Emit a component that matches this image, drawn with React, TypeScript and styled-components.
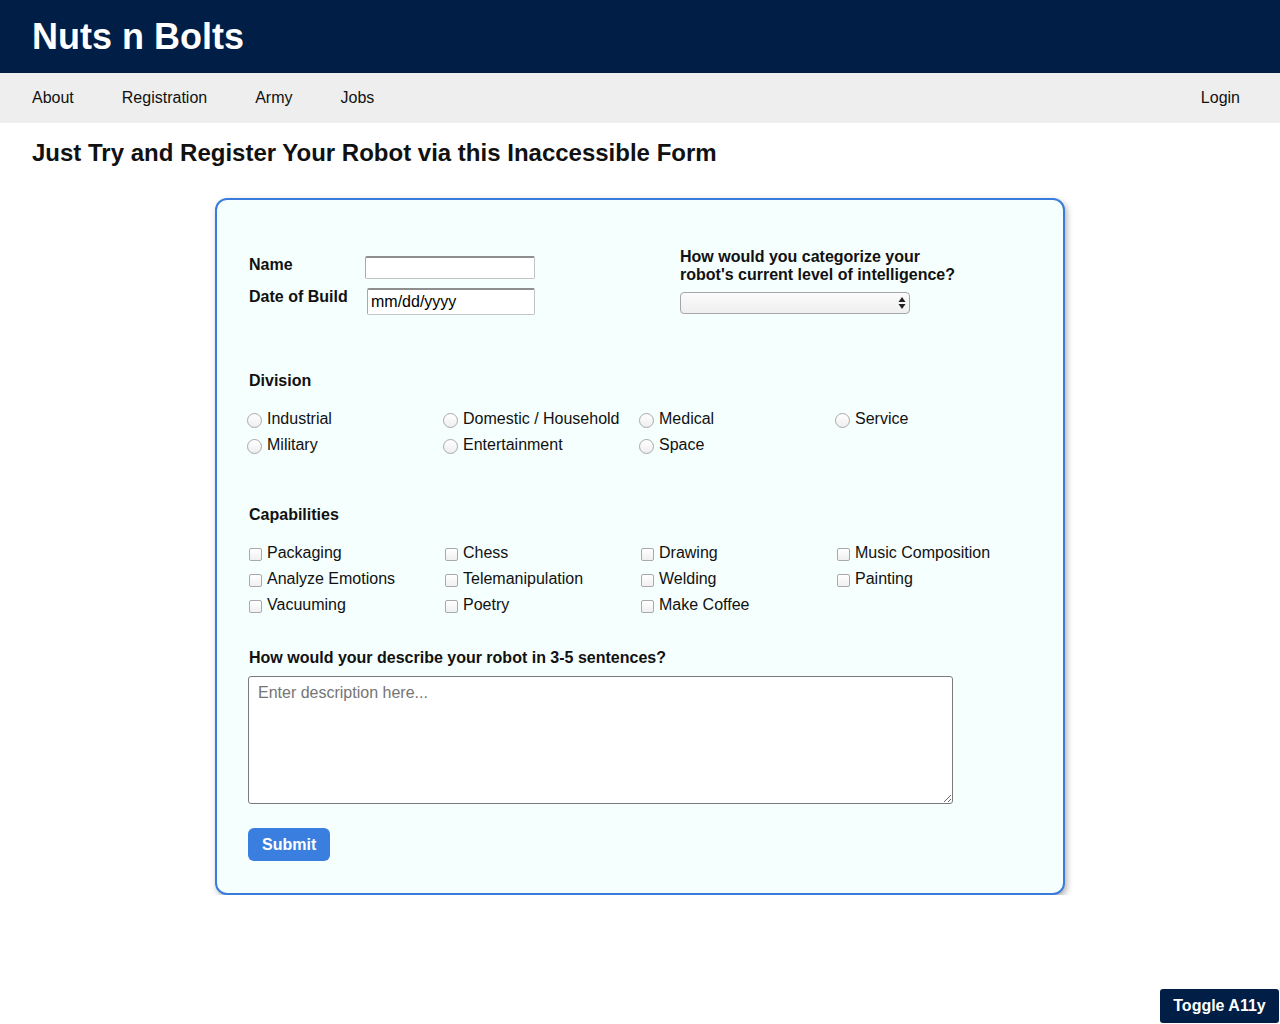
import styled, { createGlobalStyle } from "styled-components";

const GlobalStyle = createGlobalStyle`
	body {
		margin: 0;
		background: #fff;
		font-family: "Liberation Sans", Arial, Helvetica, sans-serif;
		font-size: 16px;
		color: #111;
	}
`;

const Header = styled.header`
	height: 73px;
	background-color: #001e46;
	display: flex;
	align-items: center;
	padding: 0 32px;
	box-sizing: border-box;
`;
const Logo = styled.h1`
	margin: 0;
	color: #fff;
	font-size: 36px;
	font-weight: 700;
	line-height: 1;
`;
const Nav = styled.nav`
	height: 50px;
	background-color: #eee;
	display: flex;
	align-items: center;
	padding: 0 40px 0 32px;
`;
const NavLink = styled.a`
	color: #111;
	text-decoration: none;
	margin-right: 48px;
	&:last-child {
		margin: 0 0 0 auto;
	}
`;
const PageTitle = styled.h2`
	margin: 16px 32px 0;
	font-size: 24px;
	line-height: 28px;
	font-weight: 700;
`;
const Card = styled.form`
	width: 850px;
	box-sizing: border-box;
	margin: 31px auto 0;
	padding: 48px 32px 32px;
	background-color: #f5fffe;
	border: 2px solid #3a7cdc;
	border-radius: 12px;
	box-shadow: 2px 3px 6px rgba(0, 0, 0, 0.3);
`;
const TopRow = styled.div`
	display: flex;
	align-items: flex-start;
`;
const Basics = styled.div`
	width: 431px;
	margin-top: 8px;
	display: grid;
	grid-template-columns: 116px 170px;
	row-gap: 9px;
	align-items: center;
`;
const FieldLabel = styled.label`
	font-weight: 700;
	line-height: 18px;
	align-self: start;
`;
const TextInput = styled.input<{ $tall?: boolean; $inset?: number }>`
	box-sizing: border-box;
	width: ${(p) => 170 - (p.$inset ?? 0)}px;
	margin-left: ${(p) => p.$inset ?? 0}px;
	height: ${(p) => (p.$tall ? 27 : 23)}px;
	padding: 0 3px;
	font: inherit;
	color: #000;
	background: #fff;
	border: 1px solid #c4c4c4;
	border-top: 2px solid #8e8e8e;
	border-left-color: #a8a8a8;
	border-radius: 2px;
`;
const Intelligence = styled.div`
	width: 290px;
`;
const Question = styled.label`
	display: block;
	font-weight: 700;
	line-height: 18px;
`;
const SelectWrap = styled.div`
	position: relative;
	width: 230px;
	margin-top: 8px;
`;
const Select = styled.select`
	appearance: none;
	box-sizing: border-box;
	width: 230px;
	height: 22px;
	border: 1px solid #a6a6a6;
	border-radius: 4px;
	background: linear-gradient(#fbfbfb, #efefef);
	font: inherit;
	font-size: 13px;
`;
const Arrows = styled.svg`
	position: absolute;
	right: 4px;
	top: 4px;
	pointer-events: none;
`;
const Section = styled.fieldset<{ $gap: number }>`
	border: 0;
	margin: ${(p) => p.$gap}px 0 0;
	padding: 0;
	min-width: 0;
`;
const Legend = styled.div`
	font-weight: 700;
	line-height: 18px;
	margin-bottom: 16px;
`;
const OptionGrid = styled.div`
	display: grid;
	grid-template-columns: repeat(4, 196px);
	grid-auto-rows: 26px;
	margin-left: -2px;
`;
const Option = styled.label`
	display: flex;
	align-items: center;
	line-height: 18px;
	white-space: nowrap;
`;
const Mark = styled.span`
	width: 20px;
	display: flex;
	flex: none;
	margin-top: 2px;
`;
const Radio = styled.input`
	appearance: none;
	margin: 0;
	width: 15px;
	height: 15px;
	border-radius: 50%;
	border: 1px solid #a9a9a9;
	background: linear-gradient(#fff, #eeeeee);
	box-sizing: border-box;
`;
const Checkbox = styled.input`
	appearance: none;
	margin: 0 0 0 2px;
	width: 13px;
	height: 13px;
	border-radius: 2px;
	border: 1px solid #a9a9a9;
	background: linear-gradient(#fff, #f0f0f0);
	box-sizing: border-box;
`;
const Description = styled.div`
	margin-top: 31px;
`;
const DescLabel = styled.label`
	display: block;
	font-weight: 700;
	line-height: 18px;
	margin-bottom: 9px;
`;
const TextArea = styled.textarea`
	display: block;
	box-sizing: border-box;
	width: 705px;
	height: 128px;
	margin-left: -1px;
	padding: 7px 9px;
	font: inherit;
	border: 1px solid #7a7a7a;
	border-radius: 3px;
	background: #fff;
	resize: both;
	&::placeholder {
		color: #757575;
	}
`;
const SubmitButton = styled.button`
	margin: 24px 0 0 -1px;
	height: 33px;
	padding: 0 14px;
	border: 0;
	border-radius: 6px;
	background-color: #3a7fdf;
	color: #fff;
	font: inherit;
	font-weight: 700;
`;
const ToggleButton = styled.button`
	position: fixed;
	right: 1px;
	bottom: 1px;
	width: 119px;
	height: 34px;
	border: 0;
	border-radius: 3px;
	background-color: #001e46;
	color: #fff;
	font: inherit;
	font-weight: 700;
`;

const divisions = [
	"Industrial",
	"Domestic / Household",
	"Medical",
	"Service",
	"Military",
	"Entertainment",
	"Space",
];
const capabilities = [
	"Packaging",
	"Chess",
	"Drawing",
	"Music Composition",
	"Analyze Emotions",
	"Telemanipulation",
	"Welding",
	"Painting",
	"Vacuuming",
	"Poetry",
	"Make Coffee",
];

export default function App(): JSX.Element {
	return (
		<>
			<GlobalStyle />
			<Header>
				<Logo>Nuts n Bolts</Logo>
			</Header>
			<Nav>
				<NavLink href="#">About</NavLink>
				<NavLink href="#">Registration</NavLink>
				<NavLink href="#">Army</NavLink>
				<NavLink href="#">Jobs</NavLink>
				<NavLink href="#">Login</NavLink>
			</Nav>
			<PageTitle>Just Try and Register Your Robot via this Inaccessible Form</PageTitle>
			<Card onSubmit={(e) => e.preventDefault()}>
				<TopRow>
					<Basics>
						<FieldLabel>Name</FieldLabel>
						<TextInput type="text" />
						<FieldLabel>Date of Build</FieldLabel>
						<TextInput type="text" $tall $inset={2} defaultValue="mm/dd/yyyy" />
					</Basics>
					<Intelligence>
						<Question>
							How would you categorize your robot's current level of intelligence?
						</Question>
						<SelectWrap>
							<Select defaultValue="">
								<option value=""></option>
								<option>Basic</option>
								<option>Advanced</option>
								<option>Sentient</option>
							</Select>
							<Arrows width="8" height="14" viewBox="0 0 8 14">
								<path d="M4 1 L7.5 6 H0.5 Z" fill="#222" />
								<path d="M4 13 L7.5 8 H0.5 Z" fill="#222" />
							</Arrows>
						</SelectWrap>
					</Intelligence>
				</TopRow>

				<Section $gap={57}>
					<Legend>Division</Legend>
					<OptionGrid>
						{divisions.map((d) => (
							<Option key={d}>
								<Mark>
									<Radio type="radio" name="division" />
								</Mark>
								{d}
							</Option>
						))}
					</OptionGrid>
				</Section>

				<Section $gap={48}>
					<Legend>Capabilities</Legend>
					<OptionGrid>
						{capabilities.map((c) => (
							<Option key={c}>
								<Mark>
									<Checkbox type="checkbox" />
								</Mark>
								{c}
							</Option>
						))}
					</OptionGrid>
				</Section>

				<Description>
					<DescLabel>How would your describe your robot in 3-5 sentences?</DescLabel>
					<TextArea placeholder="Enter description here..." />
				</Description>
				<SubmitButton type="submit">Submit</SubmitButton>
			</Card>
			<ToggleButton type="button">Toggle A11y</ToggleButton>
		</>
	);
}
